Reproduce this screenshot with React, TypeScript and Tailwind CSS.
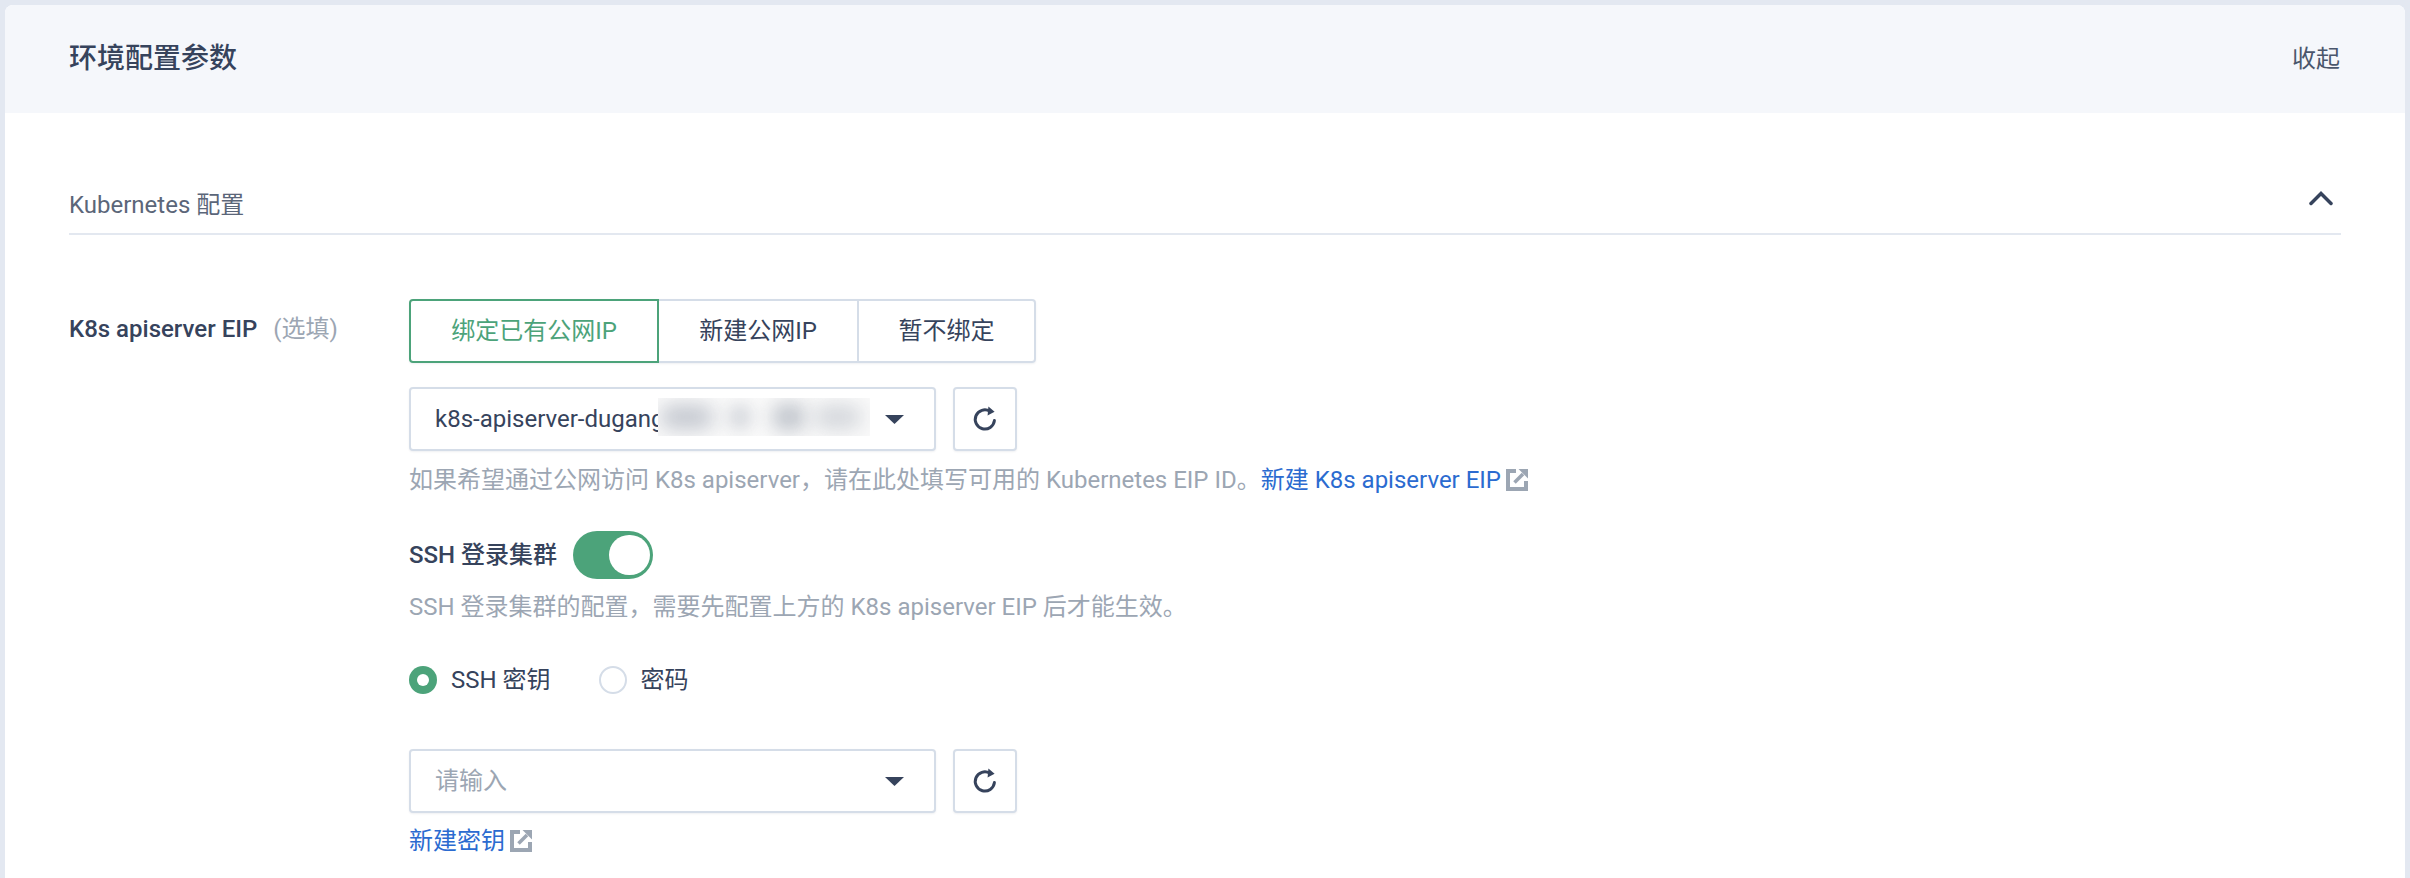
const FONT = "font-['Roboto','Noto_Sans_CJK_SC',sans-serif]";

function RefreshIcon() {
  return (
    <svg width="26" height="26" viewBox="0 0 26 26" fill="none" className="text-[#36435c]">
      <path d="M22.4 14.6A9.6 9.6 0 1 1 17.8 5.2" stroke="currentColor" strokeWidth="3" strokeLinecap="round" />
      <path d="M16.4 0.5 L22.6 5.8 L15.6 9.4 Z" fill="currentColor" />
    </svg>
  );
}

function ExternalIcon() {
  return (
    <svg width="22" height="22" viewBox="0 0 22 22" fill="none" className="text-[#9ca6b3]">
      <path d="M10 2H2V20H20V12" stroke="currentColor" strokeWidth="4" />
      <path d="M8.5 13.5L17 5" stroke="currentColor" strokeWidth="3.5" />
      <path d="M12.5 0H22V9.5Z" fill="currentColor" />
    </svg>
  );
}

function Caret() {
  return (
    <svg width="19" height="9" viewBox="0 0 19 9" className="text-[#36435c]">
      <path d="M0 0H19L9.5 9Z" fill="currentColor" />
    </svg>
  );
}

function SelectRow({ children }: { children: React.ReactNode }) {
  return (
    <div className="flex gap-[17px]">
      <div className="relative flex h-[64px] w-[527px] items-center justify-between rounded-[4px] border-2 border-[#d5dde8] bg-white pl-[24px] pr-[30px] shadow-[0_1px_2px_rgba(54,67,92,0.08)]">
        {children}
        <Caret />
      </div>
      <button className="flex h-[64px] w-[64px] items-center justify-center rounded-[4px] border-2 border-[#d5dde8] bg-white shadow-[0_1px_2px_rgba(54,67,92,0.08)]">
        <RefreshIcon />
      </button>
    </div>
  );
}

export default function App() {
  return (
    <div className={`${FONT} h-[878px] overflow-hidden bg-[#e3e8f1] pl-[5px] pr-[5px] pt-[5px] text-[24px] text-[#36435c]`}>
      <div className="h-full overflow-hidden rounded-t-[8px] bg-white">
        <div className="flex h-[108px] items-center justify-between bg-[#f5f7fb] pl-[64px] pr-[65px]">
          <h2 className="text-[28px] font-medium leading-[40px]">环境配置参数</h2>
          <span className="leading-[32px] text-[#4a566c]">收起</span>
        </div>

        <div className="px-[64px]">
          <div className="flex h-[122px] items-end justify-between border-b-2 border-[#e3e8f0] pb-[12px]">
            <span className="leading-[32px] text-[#5b6679]">Kubernetes 配置</span>
            <svg width="24" height="16" viewBox="0 0 24 16" fill="none" className="mb-[15px] mr-[8px] text-[#36435c]">
              <path d="M2 13.5L12 3.5L22 13.5" stroke="currentColor" strokeWidth="3.5" strokeLinecap="round" />
            </svg>
          </div>

          <div className="mt-[64px] flex">
            <div className="mt-[14px] flex w-[340px] shrink-0 items-start leading-[32px]">
              <span className="font-medium">K8s apiserver EIP</span>
              <span className="ml-[16px] text-[#9ca6b3]">(选填)</span>
            </div>

            <div>
              <div className="flex h-[64px] w-[627px] rounded-[4px] shadow-[0_1px_2px_rgba(54,67,92,0.08)]">
                <button className="h-full w-[250px] rounded-l-[4px] border-2 border-[#4ca37a] text-[#4ca37a]">绑定已有公网IP</button>
                <button className="h-full w-[198px] border-y-2 border-[#d5dde8]">新建公网IP</button>
                <button className="h-full w-[179px] rounded-r-[4px] border-2 border-[#d5dde8]">暂不绑定</button>
              </div>

              <div className="mt-[24px]">
                <SelectRow>
                  <span className="leading-[32px]">k8s-apiserver-dugang</span>
                  <div className="absolute left-[247px] top-[9px] flex h-[38px] w-[212px] items-center overflow-hidden bg-[#fafafa] px-[2px]">
                    <span className="h-[24px] w-[54px] shrink-0 rounded-full bg-[#c2c6ce] blur-[10px]" />
                    <span className="ml-[16px] h-[24px] w-[20px] shrink-0 rounded-full bg-[#c8ccd3] blur-[9px]" />
                    <span className="ml-[22px] h-[26px] w-[34px] shrink-0 rounded-full bg-[#b9bec6] blur-[10px]" />
                    <span className="ml-[8px] h-[24px] w-[48px] shrink-0 rounded-full bg-[#d2d5da] blur-[10px]" />
                  </div>
                </SelectRow>
              </div>

              <p className="mt-[13px] flex items-center whitespace-nowrap leading-[32px] text-[#9ca6b3]">
                如果希望通过公网访问 K8s apiserver，请在此处填写可用的 Kubernetes EIP ID。
                <a className="text-[#2b6bd0]">新建 K8s apiserver EIP</a>
                <span className="ml-[5px]"><ExternalIcon /></span>
              </p>

              <div className="mt-[35px] flex items-center">
                <span className="font-medium leading-[32px]">SSH 登录集群</span>
                <div className="ml-[16px] flex h-[48px] w-[80px] items-center justify-end rounded-full bg-[#4ca37a] pr-[3px]">
                  <div className="h-[40px] w-[41px] rounded-full bg-white" />
                </div>
              </div>

              <p className="mt-[12px] whitespace-nowrap leading-[32px] text-[#9ca6b3]">
                SSH 登录集群的配置，需要先配置上方的 K8s apiserver EIP 后才能生效。
              </p>

              <div className="mt-[43px] flex h-[28px] items-center">
                <span className="flex h-[28px] w-[28px] items-center justify-center rounded-full bg-[#4ca37a]">
                  <span className="h-[12px] w-[12px] rounded-full bg-white" />
                </span>
                <span className="ml-[14px] leading-[32px]">SSH 密钥</span>
                <span className="ml-[48px] h-[28px] w-[28px] rounded-full border-2 border-[#d5dde8] bg-white" />
                <span className="ml-[14px] leading-[32px]">密码</span>
              </div>

              <div className="mt-[55px]">
                <SelectRow>
                  <span className="leading-[32px] text-[#9ca6b3]">请输入</span>
                </SelectRow>
              </div>

              <p className="mt-[12px] flex items-center leading-[32px]">
                <a className="text-[#2b6bd0]">新建密钥</a>
                <span className="ml-[5px]"><ExternalIcon /></span>
              </p>
            </div>
          </div>
        </div>
      </div>
    </div>
  );
}
